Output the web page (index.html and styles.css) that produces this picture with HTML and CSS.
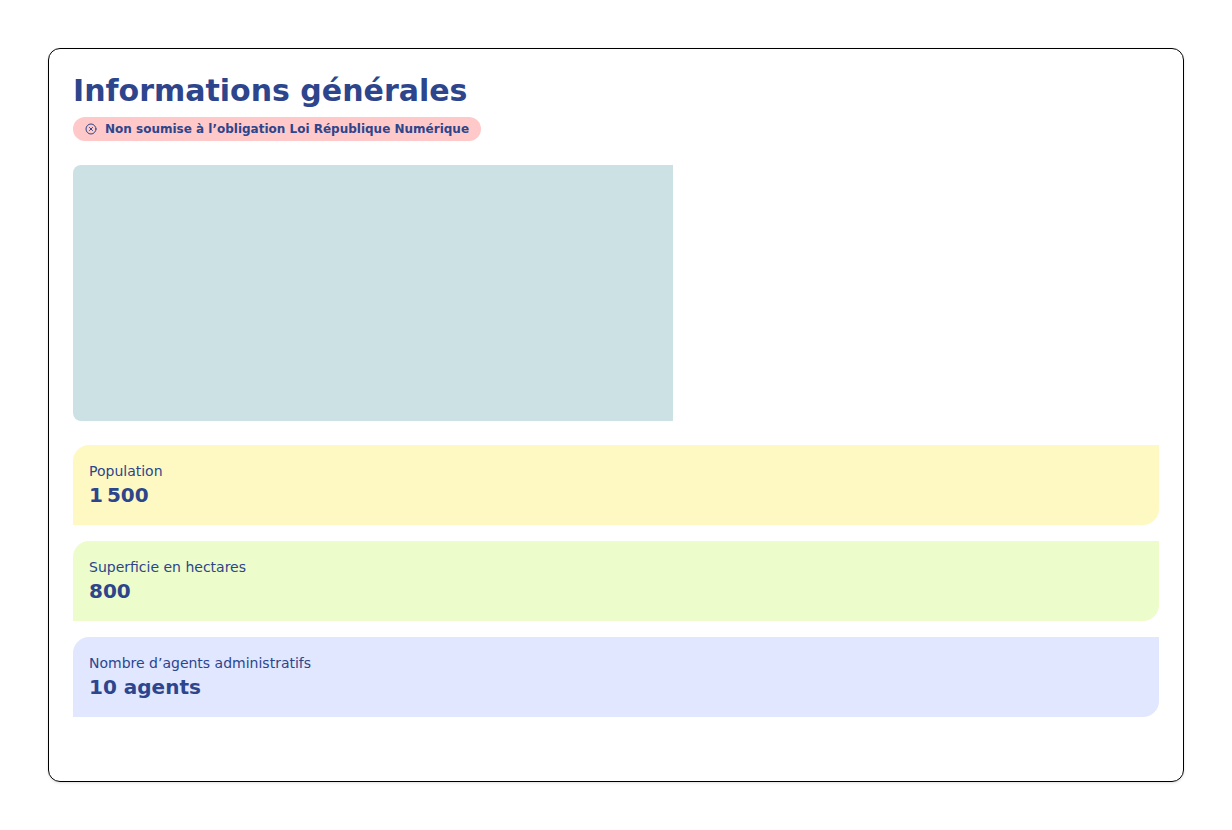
FILE: index.html
```html
<!DOCTYPE html>
<html lang="fr">
<head>
<meta charset="utf-8">
<title>Informations générales</title>
<link rel="stylesheet" href="styles.css">
</head>
<body>
<main class="card">
  <header class="card-header">
    <h1 class="title">Informations générales</h1>
    <p class="badge">
      <svg class="badge-icon" viewBox="0 0 24 24" aria-hidden="true"><circle cx="12" cy="12" r="10"/><path d="m15 9-6 6M9 9l6 6"/></svg>
      <span>Non soumise à l’obligation Loi République Numérique</span>
    </p>
  </header>
  <div class="map"></div>
  <dl class="stats">
    <div class="stat stat-yellow"><dt>Population</dt><dd>1&#8239;500</dd></div>
    <div class="stat stat-green"><dt>Superficie en hectares</dt><dd>800</dd></div>
    <div class="stat stat-blue"><dt>Nombre d’agents administratifs</dt><dd>10 agents</dd></div>
  </dl>
</main>
</body>
</html>
```

FILE: styles.css
```css
* { box-sizing: border-box; margin: 0; }
body {
  padding: 48px;
  background: #fff;
  color: #2c458c;
  font-family: "DejaVu Sans", sans-serif;
}
.card {
  display: flex;
  flex-direction: column;
  gap: 24px;
  padding: 24px 24px 64px;
  border: 1px solid #000;
  border-radius: 12px;
  box-shadow: 0 1px 3px rgb(0 0 0 / 10%), 0 1px 2px -1px rgb(0 0 0 / 10%);
}
.card-header {
  display: flex;
  flex-direction: column;
  align-items: flex-start;
  gap: 8px;
}
.title { font-size: 30px; line-height: 36px; font-weight: 700; }
.badge {
  display: flex;
  align-items: center;
  gap: 8px;
  padding: 4px 12px;
  border-radius: 12px;
  background: #ffc9c9;
  font-size: 12px;
  line-height: 16px;
  font-weight: 700;
}
.badge-icon {
  width: 12px;
  height: 12px;
  fill: none;
  stroke: currentColor;
  stroke-width: 2;
  stroke-linecap: round;
  stroke-linejoin: round;
}
.map {
  width: 100%;
  max-width: 600px;
  height: 256px;
  border-radius: 8px 0 0 8px;
  background: #cce1e4;
}
.stats { display: flex; flex-direction: column; gap: 16px; }
.stat { padding: 16px; border-radius: 16px 0; }
.stat-yellow { background: #fef9c2; }
.stat-green { background: #ecfcca; }
.stat-blue { background: #e0e7ff; }
dt { font-size: 14px; line-height: 20px; }
dd { font-size: 20px; line-height: 28px; font-weight: 700; }
```
